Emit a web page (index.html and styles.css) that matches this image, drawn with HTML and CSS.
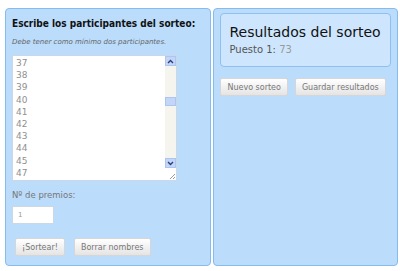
FILE: index.html
```html
<!DOCTYPE html>
<html lang="es">
<head>
    <meta charset="UTF-8">
    <title>Sorteo</title>
    <link rel="stylesheet" href="styles.css">
</head>
<body>
    <div class="container">
        <div class="panel panel-left">
            <h2>Escribe los participantes del sorteo:</h2>
            <p class="hint">Debe tener como mínimo dos participantes.</p>

            <div class="names-box">
                <div class="names">
                    <div>37</div>
                    <div>38</div>
                    <div>39</div>
                    <div>40</div>
                    <div>41</div>
                    <div>42</div>
                    <div>43</div>
                    <div>44</div>
                    <div>45</div>
                    <div>47</div>
                </div>
                <div class="scrollbar">
                    <div class="sb-btn">
                        <svg width="7" height="5" viewBox="0 0 7 5"><path d="M1 4 L3.5 1.5 L6 4" fill="none" stroke="#2a3d7a" stroke-width="1.4"/></svg>
                    </div>
                    <div class="sb-track">
                        <div class="sb-thumb"></div>
                    </div>
                    <div class="sb-btn">
                        <svg width="7" height="5" viewBox="0 0 7 5"><path d="M1 1 L3.5 3.5 L6 1" fill="none" stroke="#2a3d7a" stroke-width="1.4"/></svg>
                    </div>
                    <div class="sb-grip">
                        <svg width="8" height="8" viewBox="0 0 8 8"><path d="M7 2 L2 7 M7 5 L5 7" stroke="#9a9a9a" stroke-width="1"/></svg>
                    </div>
                </div>
            </div>

            <label class="field-label" for="premios">Nº de premios:</label>
            <input type="text" id="premios" class="small-input" value="1">

            <div class="buttons">
                <button class="btn">¡Sortear!</button>
                <button class="btn">Borrar nombres</button>
            </div>
        </div>

        <div class="panel panel-right">
            <div class="results">
                <h1>Resultados del sorteo</h1>
                <p class="place"><span class="place-label">Puesto 1:</span> 73</p>
            </div>
            <div class="buttons buttons-right">
                <button class="btn">Nuevo sorteo</button>
                <button class="btn">Guardar resultados</button>
            </div>
        </div>
    </div>
</body>
</html>
```

FILE: styles.css
```css
* {
    margin: 0;
    padding: 0;
    box-sizing: border-box;
}

body {
    font-family: 'DejaVu Sans', Verdana, sans-serif;
    background: #ffffff;
    padding: 8px 2px 0 5px;
}

.container {
    display: flex;
    gap: 2px;
}

.panel {
    background: #bbdcfb;
    border: 1px solid #86bbef;
    border-radius: 4px;
    height: 258px;
}

.panel-left {
    width: 207px;
    padding: 8px 6px 0 6px;
}

.panel-right {
    width: 185px;
    padding: 4px 6px 0 6px;
}

.panel-left h2 {
    font-family: 'DejaVu Sans Condensed', 'DejaVu Sans', sans-serif;
    font-size: 10px;
    font-weight: bold;
    color: #111;
    line-height: 14px;
    white-space: nowrap;
}

.hint {
    font-size: 7px;
    font-style: italic;
    color: #666;
    margin-top: 6px;
    line-height: 10px;
}

.names-box {
    display: flex;
    width: 165px;
    height: 126px;
    margin-top: 8px;
    background: #fff;
    border: 1px solid #c9d7e6;
}

.names {
    flex: 1;
    padding: 1px 0 0 3px;
    font-size: 9px;
    line-height: 12.2px;
    color: #909090;
}

.scrollbar {
    width: 11px;
    display: flex;
    flex-direction: column;
    background: #f6f4ee;
}

.sb-btn {
    height: 10px;
    background: #c4d6f8;
    border: 1px solid #aec5ef;
    display: flex;
    align-items: center;
    justify-content: center;
}

.sb-track {
    flex: 1;
    padding-top: 31px;
}

.sb-thumb {
    height: 9px;
    background: #c4d6f8;
    border: 1px solid #aec5ef;
}

.sb-grip {
    height: 12px;
    display: flex;
    align-items: flex-end;
    justify-content: flex-end;
    background: #fff;
}

.field-label {
    display: block;
    font-size: 8.5px;
    color: #777;
    margin-top: 8px;
    line-height: 12px;
}

.small-input {
    display: block;
    width: 42px;
    height: 18px;
    margin-top: 5px;
    border: 1px solid #c9d7e6;
    font-family: inherit;
    font-size: 7px;
    color: #999;
    padding-left: 5px;
}

.buttons {
    display: flex;
    gap: 9px;
    margin-top: 14px;
    padding-left: 3px;
}

.btn {
    font-family: inherit;
    font-size: 8px;
    color: #777;
    height: 18px;
    padding: 0 6px;
    background: linear-gradient(#ffffff, #e4e4e4);
    border: 1px solid #d6d6d6;
    border-radius: 2px;
}

.results {
    background: #cde6fd;
    border: 1px solid #8dbff0;
    border-radius: 4px;
    height: 54px;
    padding: 9px 8px 0 8px;
}

.results h1 {
    font-size: 14px;
    font-weight: normal;
    color: #111;
    line-height: 18px;
    white-space: nowrap;
}

.place {
    font-size: 10px;
    color: #999;
    line-height: 13px;
    margin-top: 2px;
}

.place-label {
    color: #555;
}

.buttons-right {
    margin-top: 11px;
    padding-left: 0;
    gap: 7px;
}
```
